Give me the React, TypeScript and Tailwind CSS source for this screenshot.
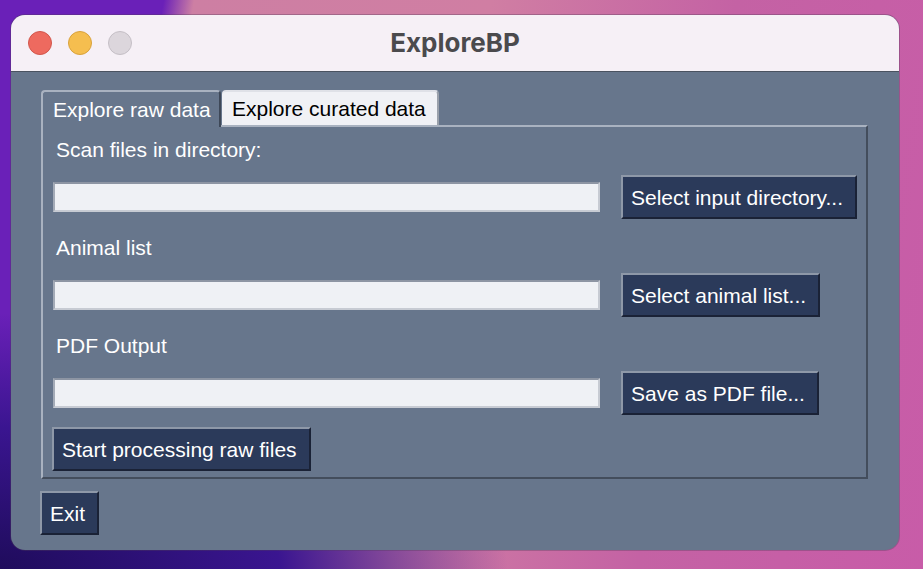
import React from 'react';

const Bevel: React.FC<{ label: string; className?: string }> = ({ label, className = '' }) => (
  <button
    className={`h-[44px] pl-[8px] pr-[12px] bg-[#2b3a5a] text-white text-[21px] leading-none border-2 border-t-[#8e98a8] border-l-[#8e98a8] border-b-[#1a2236] border-r-[#1a2236] whitespace-nowrap ${className}`}
  >
    {label}
  </button>
);

const PathRow: React.FC<{ label: string; button: string }> = ({ label, button }) => (
  <>
    <div className="h-[24px] ml-[13px] text-[21px] leading-[24px] text-white">{label}</div>
    <div className="flex items-center gap-[21px] ml-[10px] mt-[13px]">
      <div className="w-[547px] h-[30px] bg-[#eff1f5] border-2 border-t-[#8d95a3] border-l-[#a4abb7] border-b-[#c7cbd3] border-r-[#c7cbd3]" />
      <Bevel label={button} />
    </div>
  </>
);

export default function App() {
  return (
    <div
      className="w-[923px] h-[569px] overflow-hidden pl-[11px] pt-[15px] bg-[radial-gradient(ellipse_55%_45%_at_0%_100%,#1f0c5c_0%,#3a1590_55%,transparent_100%),linear-gradient(100deg,#6a20b8_0%,#6a20b8_16%,#cd7fa3_19%,#d07ea3_48%,#c462a4_72%,#c85ca8_100%)]"
      style={{ fontFamily: '"Liberation Sans", Arial, sans-serif' }}
    >
      <div className="w-[888px] h-[535px] rounded-[14px] overflow-hidden flex flex-col bg-[#67768c] shadow-[0_0_0_1px_rgba(80,60,90,0.35)]">
        {/* title bar */}
        <div className="h-[57px] shrink-0 bg-[#f6f0f6] border-b border-[#4a5260] flex items-center relative">
          <div className="flex items-center gap-[16px] pl-[17px]">
            <span className="w-[24px] h-[24px] rounded-full bg-[#ee6a5f] border border-[#d2564c]" />
            <span className="w-[24px] h-[24px] rounded-full bg-[#f5be4f] border border-[#d9a23c]" />
            <span className="w-[24px] h-[24px] rounded-full bg-[#dcd6dc] border border-[#c5bfc6]" />
          </div>
          <div
            className="absolute left-0 right-0 -top-[1px] bottom-0 flex items-center justify-center text-[26px] font-bold text-[#4b4a4d]"
            style={{ fontFamily: 'Inter, "Open Sans", sans-serif' }}
          >
            ExploreBP
          </div>
        </div>

        {/* body */}
        <div className="flex-1 pl-[30px] pr-[30px] pt-[16px]">
          {/* tabs */}
          <div className="flex items-end h-[37px] w-[827px]">
            <div className="h-[37px] w-[180px] pl-[10px] flex items-center text-[21px] text-white bg-[#67768c] border-t-2 border-l-2 border-r-2 border-t-[#a9b2c0] border-l-[#a9b2c0] border-r-[#3e4858] rounded-t-[4px] -mb-[2px] relative z-10">
              Explore raw data
            </div>
            <div className="h-[35px] w-[217px] pl-[10px] flex items-center text-[21px] text-black bg-[#f0f1f5] border-t-2 border-r-2 border-t-[#dfe1e7] border-r-[#9aa0aa] rounded-t-[4px] ml-[1px]">
              Explore curated data
            </div>
          </div>
          {/* panel */}
          <div className="w-[827px] h-[354px] border-2 border-t-[#a9b2c0] border-l-[#a9b2c0] border-b-[#434d5c] border-r-[#434d5c] pt-[11px] flex flex-col">
            <PathRow label="Scan files in directory:" button="Select input directory..." />
            <div className="h-[17px]" />
            <PathRow label="Animal list" button="Select animal list..." />
            <div className="h-[17px]" />
            <PathRow label="PDF Output" button="Save as PDF file..." />
            <div className="ml-[9px] mt-[12px]">
              <Bevel label="Start processing raw files" />
            </div>
          </div>
          <div className="mt-[12px] -ml-[1px]">
            <Bevel label="Exit" />
          </div>
        </div>
      </div>
    </div>
  );
}
